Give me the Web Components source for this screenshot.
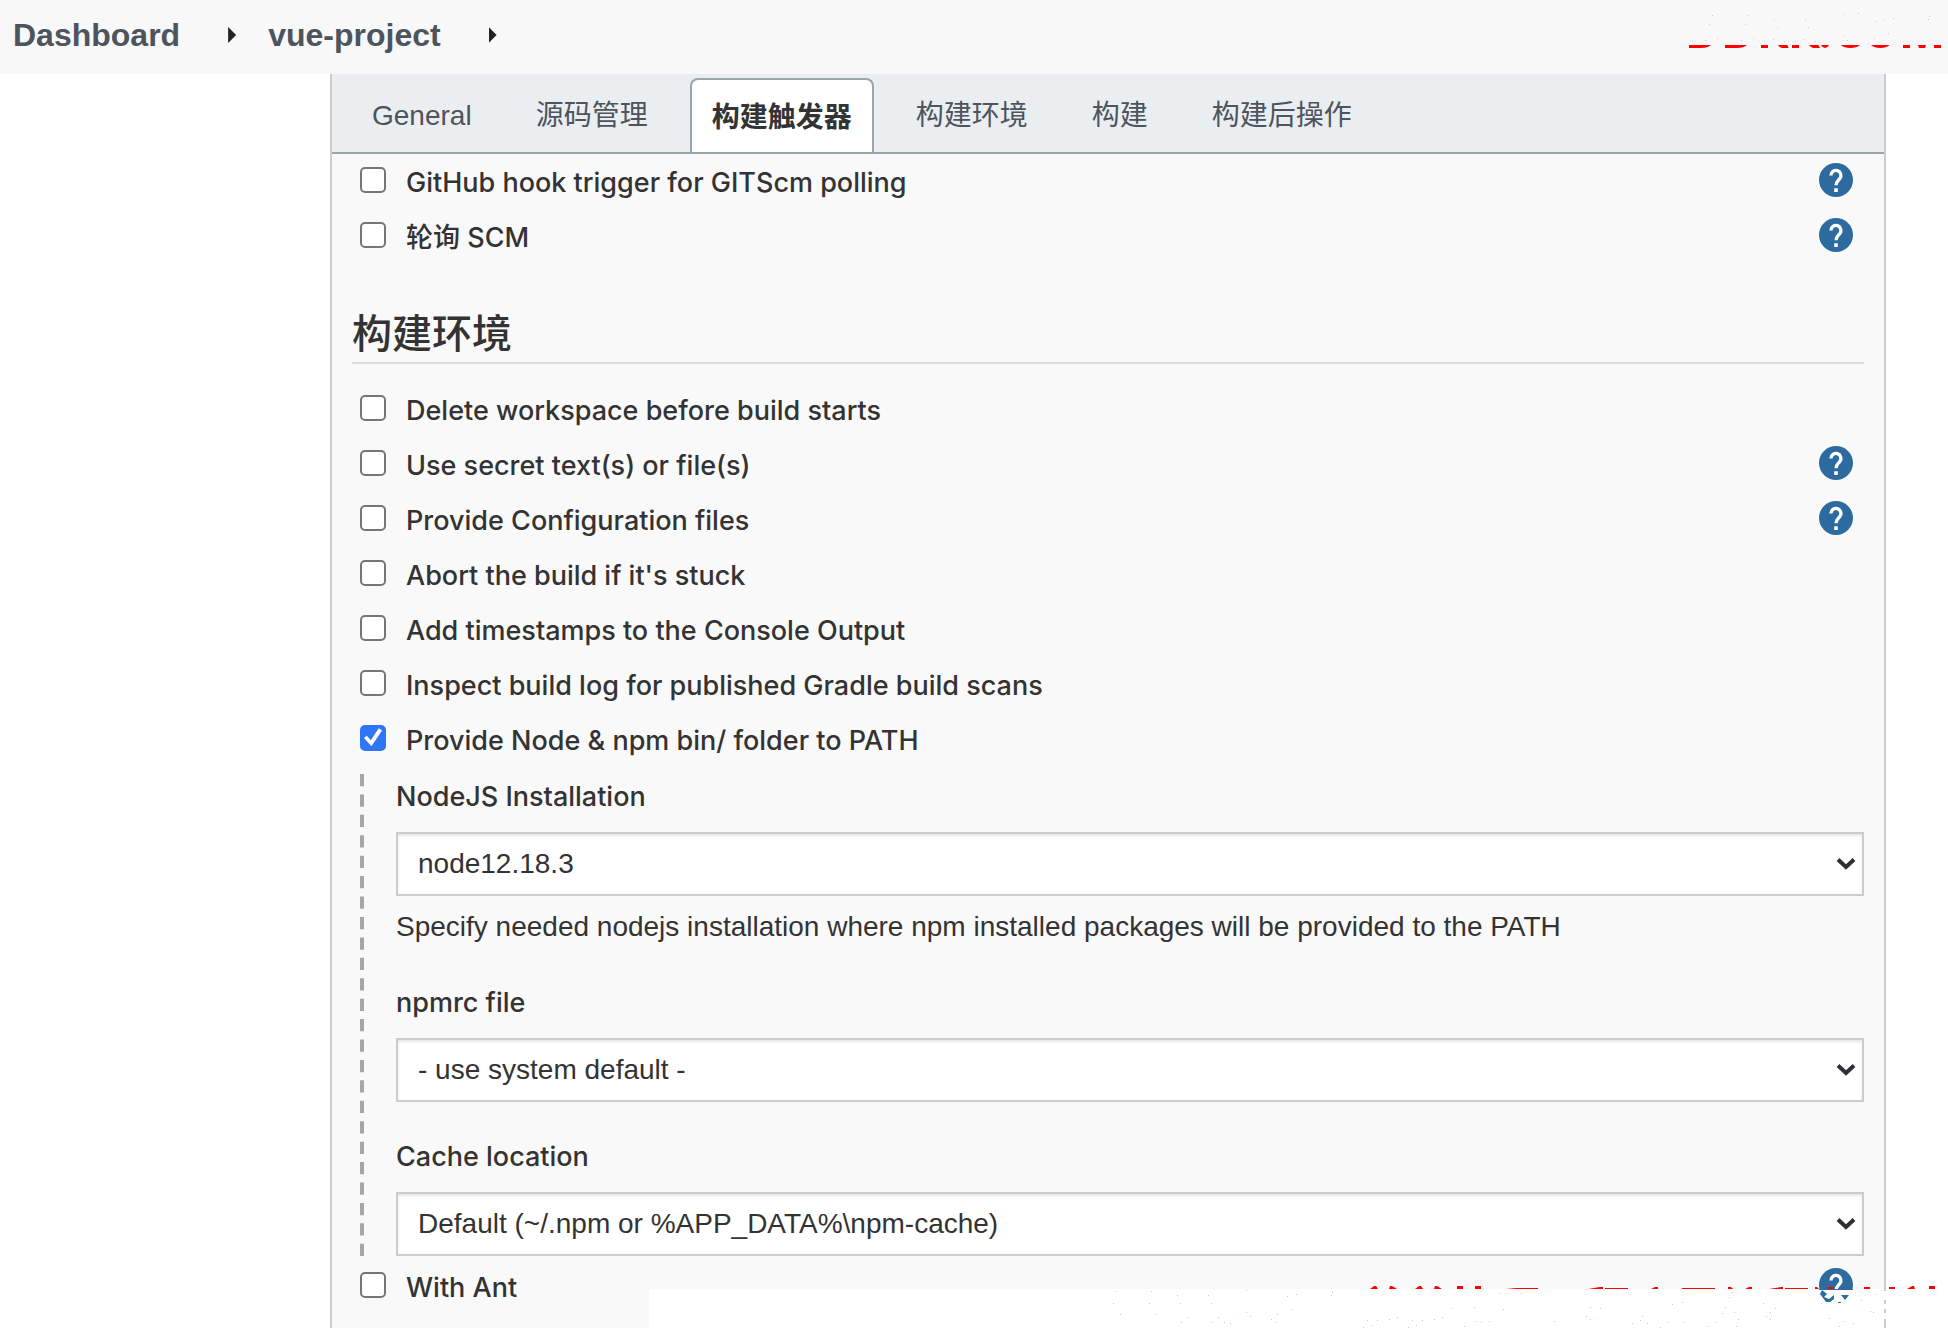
<!DOCTYPE html>
<html lang="zh-CN">
<head>
<meta charset="utf-8">
<title>vue-project Config</title>
<style>
  html, body { height: 100%; }
  body {
    margin: 0;
    background: #fff;
    color: #333;
    font-family: "Liberation Sans", "Noto Sans CJK SC", sans-serif;
    font-size: 28px;
    line-height: 32px;
    --medium: 500 27px/32px Inter, "Noto Sans CJK SC", sans-serif;
    --panel: #f9f9f9;
    --line: #ccc;
  }
</style>
</head>
<body>
<config-page>
  <bread-crumbs slot="header">
    <bread-crumb>Dashboard</bread-crumb>
    <bread-crumb>vue-project</bread-crumb>
  </bread-crumbs>
  <tab-bar slot="tabs">
    <tab-item>General</tab-item>
    <tab-item>源码管理</tab-item>
    <tab-item active>构建触发器</tab-item>
    <tab-item>构建环境</tab-item>
    <tab-item>构建</tab-item>
    <tab-item>构建后操作</tab-item>
  </tab-bar>
  <check-row help>GitHub hook trigger for GITScm polling</check-row>
  <check-row help>轮询 SCM</check-row>
  <section-title>构建环境</section-title>
  <check-row>Delete workspace before build starts</check-row>
  <check-row help>Use secret text(s) or file(s)</check-row>
  <check-row help>Provide Configuration files</check-row>
  <check-row>Abort the build if it's stuck</check-row>
  <check-row>Add timestamps to the Console Output</check-row>
  <check-row>Inspect build log for published Gradle build scans</check-row>
  <check-row checked>Provide Node &amp; npm bin/ folder to PATH</check-row>
  <nested-group>
    <select-field label="NodeJS Installation" value="node12.18.3">Specify needed nodejs installation where npm installed packages will be provided to the PATH</select-field>
    <select-field label="npmrc file" value="- use system default -"></select-field>
    <select-field label="Cache location" value="Default (~/.npm or %APP_DATA%\npm-cache)"></select-field>
  </nested-group>
  <check-row help>With Ant</check-row>
  <water-mark slot="overlay"></water-mark>
</config-page>

<script>
const define = (name, html, setup) => {
  const template = document.createElement('template');
  template.innerHTML = html;
  customElements.define(name, class extends HTMLElement {
    constructor() {
      super();
      this.attachShadow({ mode: 'open' }).append(template.content.cloneNode(true));
    }
    connectedCallback() { if (setup) setup(this, this.shadowRoot); }
  });
};

define('config-page', `
<style>
  :host { display: flex; flex-direction: column; height: 100vh; position: relative; overflow: hidden; }
  main { flex: 1; min-height: 0; margin: 0 62px 0 330px; border: solid var(--line); border-width: 0 2px; background: var(--panel); }
  .body { padding: 0 20px; }
</style>
<slot name="header"></slot>
<main><slot name="tabs"></slot><div class="body"><slot></slot></div></main>
<slot name="overlay"></slot>`);

define('bread-crumbs', `
<style>
  :host { display: flex; justify-content: space-between; flex: none; height: 74px; background: #f8f8f8; }
  nav { display: flex; gap: 32px; align-items: center; padding: 0 0 4px 13px; }
  svg { display: block; width: 308px; height: 74px; }
</style>
<nav aria-label="breadcrumb"><slot></slot></nav>
<svg viewBox="0 0 924 222" aria-hidden="true">
  <path fill="#f00" d="M147 135h66q-10 9-30 9h-36zM255 135h66q-10 9-30 9h-36zM363 135h21v9h-21zM414 135h28l4 9h-20q-8-2-12-9zM456 135h21v9h-21zM507 135h28l5 9h-20q-8-2-13-9zM543 135h24q-4 9-12 9t-12-9zM602 135h58q-10 9-29 9t-29-9zM693 135h56q-10 9-28 9t-28-9zM789 135h21v9h-21zM834 135h24l-3 9h-18zM882 135h21v9h-21z"/>
  <path fill="#f4b6b6" d="M216 45h3v3h-3zM207 72h3v3h-3zM195 120h3v3h-3zM231 114h3v3h-3zM324 45h3v3h-3zM315 72h3v3h-3zM303 120h3v3h-3zM339 114h3v3h-3zM402 57h3v3h-3zM411 81h3v3h-3zM399 117h3v3h-3zM432 123h3v3h-3zM495 57h3v3h-3zM504 81h3v3h-3zM492 117h3v3h-3zM525 123h3v3h-3zM609 42h3v3h-3zM609 108h3v3h-3zM621 120h3v3h-3zM654 39h3v3h-3zM684 129h3v3h-3zM705 63h3v3h-3zM702 114h3v3h-3zM732 60h3v3h-3zM744 99h3v3h-3zM759 54h3v3h-3zM867 48h3v3h-3zM864 57h3v3h-3z"/>
</svg>`);

define('bread-crumb', `
<style>
  :host { display: flex; align-items: center; gap: 48px; }
  a { color: #4d545d; font-weight: 700; font-size: 32px; line-height: 36px; text-decoration: none; }
  i { width: 8px; height: 16px; background: #222; clip-path: polygon(0 0, 100% 50%, 0 100%); }
</style>
<a href="#"><slot></slot></a><i></i>`);

define('tab-bar', `
<style>
  :host { display: flex; gap: 20px; height: 78px; align-items: flex-end; padding: 0 18px; background: #eaeef1; border-bottom: 2px solid #98a6ad; }
</style>
<slot></slot>`);

define('tab-item', `
<style>
  button {
    display: block; height: 74px; margin: 0; padding: 0 20px; border: 2px solid transparent; border-bottom: 0;
    border-radius: 8px 8px 0 0; background: none; color: #4d545d; font: inherit;
  }
  :host([active]) button { background: #fff; border-color: #98a6ad; color: #333; font-weight: 700; padding-top: 3px; }
</style>
<button type="button"><slot></slot></button>`);

define('section-title', `
<style>
  :host { display: block; padding: 45px 0 18px; }
  h2 { margin: 0; padding-bottom: 3px; border-bottom: 2px solid #ddd; font-size: 40px; line-height: 50px; font-weight: 500; }
</style>
<h2><slot></slot></h2>`);

define('check-row', `
<style>
  :host { display: flex; align-items: center; height: 55px; padding: 0 11px 0 8px; }
  label { flex: 1; display: flex; align-items: center; gap: 20px; padding-top: 2px; font: var(--medium); }
  input {
    appearance: none; flex: none; width: 26px; height: 26px; margin: 0 0 6px; border: 2px solid #767676; border-radius: 5px; background: #fff;
  }
  input:checked { border-color: #2f76f6; background: #2f76f6; }
  input:checked::before {
    content: ""; display: block; height: 22px; background: #fff;
    clip-path: polygon(9% 52%, 22% 42%, 40% 62%, 76% 8%, 91% 18%, 43% 90%);
  }
  button { display: none; margin: 0 0 3px; padding: 0; border: 0; background: none; }
  :host([help]) button { display: block; }
  svg { display: block; width: 34px; height: 34px; }
</style>
<label><input type="checkbox"><span><slot></slot></span></label>
<button type="button" aria-label="Help"><svg viewBox="0 0 34 34">
  <circle cx="17" cy="17" r="17" fill="#2d6a9f"/>
  <path d="M11.9 12.4a5 5 0 1 1 9 3c-1.500 2-3.900 3.200-3.900 6.900" fill="none" stroke="#fff" stroke-width="3.300"/>
  <path d="M15.200 25.300h3.600v3.600h-3.600z" fill="#fff"/>
</svg></button>`, (host, root) => {
  root.querySelector('input').checked = host.hasAttribute('checked');
});

define('nested-group', `
<style>
  :host { display: flex; gap: 32px; margin: 7px 0 3px 8px; }
  svg { flex: none; width: 4px; height: auto; }
  div { flex: 1; display: flex; flex-direction: column; gap: 39px; padding-top: 7px; }
</style>
<svg aria-hidden="true" viewBox="0 0 4 480" preserveAspectRatio="none"><line x1="2" y1="0" x2="2" y2="480" stroke="#a6a6a6" stroke-width="4" pathLength="472" stroke-dasharray="12 8"/></svg>
<div><slot></slot></div>`);

define('select-field', `
<style>
  :host { display: block; }
  label { display: block; margin-bottom: 19px; font: var(--medium); }
  .box { display: grid; align-items: center; }
  .box > * { grid-area: 1 / 1; }
  select {
    appearance: none; width: 100%; height: 64px; margin: 0; padding: 0 20px; border: 2px solid #ccc; border-radius: 0;
    background: #fff; box-shadow: inset 0 2px 3px rgba(0, 0, 0, .1); color: #333; font: inherit;
  }
  svg { justify-self: end; width: 20px; height: 14px; margin-right: 8px; pointer-events: none; }
  p { margin: 15px 0 5px; }
</style>
<label for="s"></label>
<div class="box"><select id="s"><option></option></select>
<svg viewBox="0 0 20 14"><path d="M2 2.500l8 7.500 8-7.500" fill="none" stroke="#2d3033" stroke-width="4"/></svg></div>
<p><slot></slot></p>`, (host, root) => {
  root.querySelector('label').textContent = host.getAttribute('label');
  root.querySelector('option').textContent = host.getAttribute('value');
  root.querySelector('p').hidden = !host.textContent;
});

define('water-mark', `
<style>
  :host { position: absolute; right: 0; bottom: 0; pointer-events: none; }
  svg { display: block; width: 1299px; height: 42px; }
</style>
<svg viewBox="649 1286 1299 42" aria-hidden="true">
  <path fill="#fff" d="M649 1289h1299v39H649z"/>
  <path fill="#2d6a9f" d="M1819 1289h34v1h-34zM1822 1290l5 4-3 3 5 2 5-4v4l-4 3h-4l-3-4-3-4zM1841 1295h8l-4 5zM1838 1302h3v1h-3z"/>
  <path fill="#ccc" d="M1884 1289h2v2h-2zM1884 1300h2v4h-2zM1884 1309h2v4h-2zM1884 1319h2v9h-2z"/>
  <path fill="#f00" d="M1370 1289l4-3h2l2 3zM1389 1289l1-3h2l5 3zM1415 1289l4-3h2l2 3zM1434 1289l1-3h2l5 3zM1457 1286h6v3h-6zM1475 1286h6v3h-6zM1506 1289l10-1h22v1zM1588 1289l12-2h3v2zM1605 1288h23v1h-23zM1651 1289l4-2h3v2zM1682 1288h33v1h-33zM1728 1289v-2h3l2 2zM1745 1289l4-2h3v2zM1769 1289l12-2h2v2zM1785 1288h23v1h-23zM1815 1289v-2h2l2 2zM1828 1287h6v2h-6zM1864 1287h6v2h-6zM1889 1287h6v2h-6zM1907 1289l5-3h2l1 3zM1929 1286h6v3h-6z"/>
  <g id="specks" fill="#f4b6b6"></g>
</svg>`, (host, root) => {
  const specks = [[1115,1291],[1113,1303],[1120,1314],[1151,1291],[1149,1303],[1156,1314],[1177,1295],[1180,1303],[1187,1317],[1181,1322],[1208,1295],[1211,1303],[1218,1317],[1212,1322],[1224,1322],[1230,1323],[1246,1290],[1246,1312],[1250,1316],[1271,1319],[1275,1322],[1277,1314],[1287,1296],[1296,1294],[1291,1309],[1331,1295],[1332,1292],[1363,1327],[1367,1320],[1371,1325],[1377,1320],[1389,1319],[1397,1317],[1408,1327],[1412,1320],[1416,1325],[1422,1320],[1434,1319],[1442,1317],[1451,1308],[1464,1326],[1474,1307],[1476,1321],[1481,1322],[1489,1321],[1499,1293],[1521,1293],[1503,1309],[1554,1321],[1586,1289],[1603,1290],[1590,1307],[1600,1308],[1586,1316],[1590,1319],[1642,1316],[1640,1320],[1632,1323],[1647,1323],[1660,1327],[1668,1322],[1684,1322],[1672,1304],[1682,1302],[1708,1326],[1715,1322],[1722,1313],[1725,1307],[1734,1312],[1736,1326],[1738,1319],[1729,1297],[1732,1292],[1763,1303],[1770,1312],[1766,1316],[1770,1319],[1775,1308],[1821,1303],[1829,1318],[1844,1321],[1839,1326],[1853,1323],[1861,1300],[1870,1311],[1873,1312],[1875,1294],[1881,1290]];
  root.getElementById('specks').innerHTML = specks.map(([x, y]) => `<path d="M${x} ${y}h1v1h-1z"/>`).join('');
});
</script>
</body>
</html>
